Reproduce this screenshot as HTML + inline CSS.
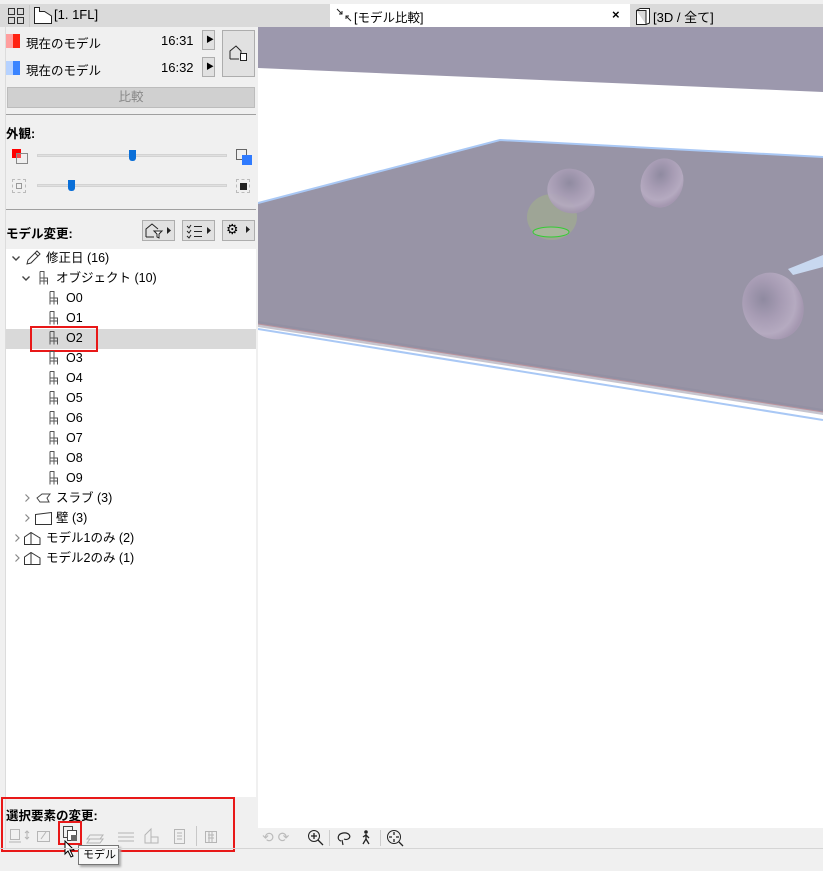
<!DOCTYPE html>
<html><head><meta charset="utf-8"><style>
*{box-sizing:border-box;margin:0;padding:0}
body{width:823px;height:871px;overflow:hidden;background:#f0f0f0;font-family:"Liberation Sans","Noto Sans CJK JP",sans-serif;font-size:12px;color:#000;position:relative}
.a{position:absolute}
.btn{position:absolute;background:#e1e1e1;border:1px solid #adadad}
.row{position:absolute;left:6px;width:250px;height:20px;line-height:20px;font-size:12.5px}
</style></head><body>
<svg width="0" height="0" style="position:absolute"><defs>
<symbol id="ch" viewBox="0 0 12 14"><path d="M3 .5H7V7H10.5V13.5 M3 .5V13.5 M3 7H7 M7 7V13.5 M10.5 10H3" fill="none" stroke="#555" stroke-width="1"/></symbol>
<symbol id="dn" viewBox="0 0 10 10"><path d="M1.5 3.5L5 7L8.5 3.5" fill="none" stroke="#444" stroke-width="1.4"/></symbol>
<symbol id="rt" viewBox="0 0 10 10"><path d="M3.5 1.5L7 5L3.5 8.5" fill="none" stroke="#888" stroke-width="1.2"/></symbol>
<symbol id="hs" viewBox="0 0 17 13"><path d="M.5 12.5V5L7 .5L16 6V12.5Z M7 .5V12.5" fill="none" stroke="#333"/></symbol>
<radialGradient id="tg" cx="40%" cy="35%" r="65%"><stop offset="0" stop-color="#8f8aa0"/><stop offset=".45" stop-color="#a79cb4"/><stop offset=".8" stop-color="#b5aac0"/><stop offset="1" stop-color="#a497b0"/></radialGradient>
</defs></svg>
<!-- top tab bar -->
<div class="a" style="left:0;top:4px;width:823px;height:23px;background:#dadada"></div>
<svg class="a" style="left:8px;top:8px" width="16" height="16"><g fill="none" stroke="#333"><rect x=".5" y=".5" width="6" height="6"/><rect x="9.5" y=".5" width="6" height="6"/><rect x=".5" y="9.5" width="6" height="6"/><rect x="9.5" y="9.5" width="6" height="6"/></g></svg>
<div class="a" style="left:29px;top:5px;width:1px;height:22px;background:#c8c8c8"></div>
<svg class="a" style="left:34px;top:7px" width="18" height="17"><path d="M.5 16.5V.5H5.5V4.5H10.5L17.5 9V16.5Z" fill="#fff" stroke="#222"/></svg>
<div class="a" style="left:54px;top:7px;font-size:13px">[1. 1FL]</div>
<div class="a" style="left:330px;top:4px;width:300px;height:23px;background:#fff"></div>
<svg class="a" style="left:336px;top:8px" width="16" height="14"><path d="M1 1L6 6M6 3V6H3 M15 13L10 8M10 11V8H13" fill="none" stroke="#222"/></svg>
<div class="a" style="left:354px;top:7px;font-size:12.5px">[モデル比較]</div>
<div class="a" style="left:612px;top:7px;font-size:13px;font-weight:bold">×</div>
<svg class="a" style="left:636px;top:8px" width="14" height="17"><path d="M.5 2.5 L4 .5 H13.5 V15 L10 16.5 H.5Z M10 16.5 V2.5 H.5" fill="#fff" stroke="#222"/></svg>
<div class="a" style="left:653px;top:7px;font-size:13px">[3D / 全て]</div>

<!-- left panel -->
<div class="a" style="left:0;top:27px;width:6px;height:821px;background:#f0f0f0;border-right:1px solid #dcdcdc"></div>
<div class="a" style="left:6px;top:34px;width:7px;height:14px;background:#ff9e9e"></div><div class="a" style="left:13px;top:34px;width:7px;height:14px;background:#f21"></div>
<div class="a" style="left:6px;top:61px;width:7px;height:14px;background:#b6d2ff"></div><div class="a" style="left:13px;top:61px;width:7px;height:14px;background:#3a84ff"></div>
<div class="a" style="left:26px;top:33px;font-size:12.5px">現在のモデル</div><div class="a" style="left:161px;top:33px;font-size:13px">16:31</div>
<div class="a" style="left:26px;top:60px;font-size:12.5px">現在のモデル</div><div class="a" style="left:161px;top:60px;font-size:13px">16:32</div>
<div class="btn" style="left:202px;top:30px;width:13px;height:20px"></div><div class="a" style="left:206px;top:34px;font-size:8px">▶</div>
<div class="btn" style="left:202px;top:57px;width:13px;height:20px"></div><div class="a" style="left:206px;top:61px;font-size:8px">▶</div>
<div class="btn" style="left:222px;top:30px;width:33px;height:47px"></div>
<svg class="a" style="left:229px;top:45px" width="20" height="16"><path d="M1 14V6L7 1L12 6V8 M1 14H10" fill="none" stroke="#222"/><rect x="11.5" y="8.5" width="6" height="7" fill="#fff" stroke="#222"/></svg>
<div class="a" style="left:7px;top:87px;width:248px;height:21px;background:#d0d0d0;border:1px solid #bcbcbc;text-align:center;line-height:19px;color:#888;font-size:12.5px">比較</div>
<div class="a" style="left:6px;top:114px;width:250px;height:1px;background:#a0a0a0"></div>
<div class="a" style="left:6px;top:123px;font-weight:bold;font-size:12.5px">外観:</div>
<div class="a" style="left:12px;top:149px;width:9px;height:9px;background:#f00"></div>
<div class="a" style="left:16px;top:153px;width:12px;height:11px;border:1px solid #888;background:rgba(240,240,240,.3)"></div>
<div class="a" style="left:37px;top:154px;width:190px;height:3px;background:#e0e0e0;border:1px solid #d3d3d3"></div>
<div class="a" style="left:129px;top:150px;width:7px;height:11px;background:#0a6fd8;border-radius:0 0 3px 3px"></div>
<div class="a" style="left:236px;top:149px;width:11px;height:11px;border:1px solid #666"></div>
<div class="a" style="left:242px;top:155px;width:10px;height:10px;background:#2f7bff"></div>
<div class="a" style="left:12px;top:179px;width:14px;height:14px;border:1px dashed #bbb"></div>
<div class="a" style="left:16px;top:183px;width:6px;height:6px;border:1px solid #999"></div>
<div class="a" style="left:37px;top:184px;width:190px;height:3px;background:#e0e0e0;border:1px solid #d3d3d3"></div>
<div class="a" style="left:68px;top:180px;width:7px;height:11px;background:#0a6fd8;border-radius:0 0 3px 3px"></div>
<div class="a" style="left:236px;top:179px;width:14px;height:14px;border:1px dashed #bbb"></div>
<div class="a" style="left:240px;top:183px;width:7px;height:7px;background:#222"></div>
<div class="a" style="left:6px;top:209px;width:250px;height:1px;background:#a0a0a0"></div>
<div class="a" style="left:6px;top:223px;font-weight:bold;font-size:12.5px">モデル変更:</div>
<div class="btn" style="left:142px;top:220px;width:33px;height:21px"></div>
<div class="btn" style="left:182px;top:220px;width:33px;height:21px"></div>
<div class="btn" style="left:222px;top:220px;width:33px;height:21px"></div>
<svg class="a" style="left:145px;top:222px" width="28" height="17"><path d="M1 15V7L7 2L13 7M1 15H9" fill="none" stroke="#222"/><path d="M9 9H17L14 12V16L12 15V12Z" fill="#fff" stroke="#222"/><path d="M22 5L26 8.5L22 12Z" fill="#222"/></svg>
<svg class="a" style="left:186px;top:222px" width="28" height="17"><path d="M1 4L3 6L5 3 M1 9L3 11L5 8 M1 14L3 16L5 13 M8 4.5H16 M8 9.5H16 M8 14.5H16" fill="none" stroke="#222"/><path d="M21 5L25 8.5L21 12Z" fill="#222"/></svg>
<div class="a" style="left:226px;top:221px;font-size:14px">⚙</div><svg class="a" style="left:245px;top:225px" width="6" height="9"><path d="M1 1L5 4.5L1 8Z" fill="#222"/></svg>
<!-- tree -->
<div class="a" style="left:6px;top:249px;width:250px;height:548px;background:#fff"></div>
<div class="a" style="left:6px;top:329px;width:250px;height:20px;background:#d9d9d9"></div>
<div class="a" style="left:30px;top:326px;width:68px;height:26px;border:2px solid #e81818"></div>
<div class="row" style="top:248px"><svg class="a" style="left:5px;top:5px" width="10" height="10"><use href="#dn"/></svg><svg class="a" style="left:19px;top:2px" width="16" height="16"><path d="M2 14L3 10L12 1L15 4L6 13Z M10 3L13 6" fill="none" stroke="#333"/></svg><span class="a" style="left:40px">修正日 (16)</span></div>
<div class="row" style="top:268px"><svg class="a" style="left:15px;top:5px" width="10" height="10"><use href="#dn"/></svg><svg class="a" style="left:31px;top:3px" width="12" height="14"><use href="#ch"/></svg><span class="a" style="left:50px">オブジェクト (10)</span></div>
<div class="row" style="top:288px"><svg class="a" style="left:41px;top:3px" width="12" height="14"><use href="#ch"/></svg><span class="a" style="left:60px">O0</span></div>
<div class="row" style="top:308px"><svg class="a" style="left:41px;top:3px" width="12" height="14"><use href="#ch"/></svg><span class="a" style="left:60px">O1</span></div>
<div class="row" style="top:328px"><svg class="a" style="left:41px;top:3px" width="12" height="14"><use href="#ch"/></svg><span class="a" style="left:60px">O2</span></div>
<div class="row" style="top:348px"><svg class="a" style="left:41px;top:3px" width="12" height="14"><use href="#ch"/></svg><span class="a" style="left:60px">O3</span></div>
<div class="row" style="top:368px"><svg class="a" style="left:41px;top:3px" width="12" height="14"><use href="#ch"/></svg><span class="a" style="left:60px">O4</span></div>
<div class="row" style="top:388px"><svg class="a" style="left:41px;top:3px" width="12" height="14"><use href="#ch"/></svg><span class="a" style="left:60px">O5</span></div>
<div class="row" style="top:408px"><svg class="a" style="left:41px;top:3px" width="12" height="14"><use href="#ch"/></svg><span class="a" style="left:60px">O6</span></div>
<div class="row" style="top:428px"><svg class="a" style="left:41px;top:3px" width="12" height="14"><use href="#ch"/></svg><span class="a" style="left:60px">O7</span></div>
<div class="row" style="top:448px"><svg class="a" style="left:41px;top:3px" width="12" height="14"><use href="#ch"/></svg><span class="a" style="left:60px">O8</span></div>
<div class="row" style="top:468px"><svg class="a" style="left:41px;top:3px" width="12" height="14"><use href="#ch"/></svg><span class="a" style="left:60px">O9</span></div>
<div class="row" style="top:488px"><svg class="a" style="left:16px;top:5px" width="10" height="10"><use href="#rt"/></svg><svg class="a" style="left:30px;top:5px" width="15" height="10"><path d="M1 5L6 1H14L11 5L13 9H4Z" fill="none" stroke="#444"/></svg><span class="a" style="left:50px">スラブ (3)</span></div>
<div class="row" style="top:508px"><svg class="a" style="left:16px;top:5px" width="10" height="10"><use href="#rt"/></svg><svg class="a" style="left:29px;top:4px" width="17" height="13"><path d="M.5 2.5L16.5 .5V12.5H.5Z" fill="none" stroke="#333"/></svg><span class="a" style="left:50px">壁 (3)</span></div>
<div class="row" style="top:528px"><svg class="a" style="left:6px;top:5px" width="10" height="10"><use href="#rt"/></svg><svg class="a" style="left:18px;top:4px" width="17" height="13"><use href="#hs"/></svg><span class="a" style="left:40px">モデル1のみ (2)</span></div>
<div class="row" style="top:548px"><svg class="a" style="left:6px;top:5px" width="10" height="10"><use href="#rt"/></svg><svg class="a" style="left:18px;top:4px" width="17" height="13"><use href="#hs"/></svg><span class="a" style="left:40px">モデル2のみ (1)</span></div>
<!-- bottom left box -->
<div class="a" style="left:1px;top:797px;width:234px;height:55px;border:2px solid #e81818"></div>
<div class="a" style="left:6px;top:805px;font-weight:bold;font-size:12.5px">選択要素の変更:</div>
<svg class="a" style="left:8px;top:827px" width="225" height="20"><g fill="none" stroke="#b5b5b5">
<rect x="2.5" y="2.5" width="9" height="10"/><path d="M1 15H13 M19 4V12M17 6L19 4L21 6M17 10L19 12L21 10"/>
<rect x="29.5" y="4.5" width="12" height="10"/><path d="M33 12L38 5"/>
<path d="M82 8H95L92 12H79Z M82 12H95L92 16H79Z"/><path d="M110 6H126M110 10H126M110 14H126"/>
<path d="M137 16V8L143 2V16Z M143 10H150V16H137"/><rect x="166.5" y="2.5" width="10" height="14"/><path d="M169 6H174M169 9H174M169 12H174"/>
<rect x="197.5" y="4.5" width="11" height="11"/><path d="M200 8H206M200 11H206M201 5V15M204 5V15"/></g></svg>
<div class="a" style="left:196px;top:826px;width:1px;height:20px;background:#c8c8c8"></div>
<div class="a" style="left:58px;top:821px;width:24px;height:24px;border:2px solid #e81818"></div>
<svg class="a" style="left:62px;top:825px" width="18" height="18"><rect x="1.5" y="1.5" width="9" height="11" fill="none" stroke="#444"/><rect x="5.5" y="5.5" width="9" height="10" fill="#fff" stroke="#444"/><rect x="9" y="10" width="6" height="6" fill="#666"/></svg>
<div class="a" style="left:78px;top:845px;width:41px;height:20px;background:#f8f8f8;border:1px solid #767676;box-shadow:2px 2px 2px #aaa;font-size:11px;line-height:18px;padding-left:4px">モデル</div>
<svg class="a" style="left:64px;top:840px" width="12" height="18"><path d="M1 1V14L4 11L7 17L9 16L6 10H10Z" fill="#fff" stroke="#000"/></svg>
<!-- viewport -->
<svg class="a" style="left:258px;top:27px" width="565" height="801">
<rect width="565" height="801" fill="#fff"/>
<polygon points="0,0 565,0 565,65 0,41" fill="#9c98ad"/>
<polygon points="0,176 242,113 565,130 565,385 0,297" fill="#9894a6"/>
<polyline points="0,176 242,113 565,130" fill="none" stroke="#a9c8f5" stroke-width="2"/>
<polyline points="0,297 565,385" fill="none" stroke="#e89a9a" stroke-width="1"/>
<polygon points="0,300 565,388 565,382 0,294" fill="#8e8ba0" opacity=".5"/>
<polyline points="0,302 565,393" fill="none" stroke="#a9c8f5" stroke-width="2"/>
<ellipse cx="294" cy="190" rx="25" ry="23" fill="#9ea596"/>
<ellipse cx="293" cy="205" rx="18" ry="5" fill="#a8b59c" stroke="#3c3" stroke-width="1"/>
<ellipse cx="313" cy="164" rx="24" ry="22" fill="url(#tg)" transform="rotate(25 313 164)" opacity=".92"/>
<ellipse cx="404" cy="156" rx="21" ry="25" fill="url(#tg)" transform="rotate(20 404 156)"/>
<ellipse cx="515" cy="279" rx="30" ry="34" fill="url(#tg)" transform="rotate(-25 515 279)"/>
<polygon points="530,242 565,228 565,240 535,248" fill="#c8d8f0"/>
</svg>
<div class="a" style="left:258px;top:828px;width:565px;height:20px;background:#f0f0f0"></div>
<div class="a" style="left:262px;top:829px;font-size:14px;color:#bbb">⟲ ⟳</div>
<svg class="a" style="left:307px;top:829px" width="18" height="18"><circle cx="7" cy="7" r="5.5" fill="none" stroke="#222"/><path d="M4 7H10M7 4V10M11 11L16 16" stroke="#222" stroke-width="1.3"/></svg>
<div class="a" style="left:329px;top:830px;width:1px;height:16px;background:#ccc"></div>
<svg class="a" style="left:336px;top:830px" width="18" height="16"><path d="M5 11C1 10 1 4 7 3C13 2 16 7 12 9C10 10 8 9 8 9M6 10L7 15" fill="none" stroke="#222" stroke-width="1.2"/></svg>
<svg class="a" style="left:360px;top:829px" width="12" height="17"><circle cx="6" cy="3" r="1.8" fill="#222"/><path d="M6 5V10L3 15M6 10L9 15M3 8L6 6L9 9" fill="none" stroke="#222" stroke-width="1.3"/></svg>
<div class="a" style="left:380px;top:830px;width:1px;height:16px;background:#ccc"></div>
<svg class="a" style="left:386px;top:829px" width="18" height="18"><circle cx="8" cy="8" r="6.5" fill="none" stroke="#222"/><path d="M8 3V6M8 10V13M3 8H6M10 8H13M13 13L17 17" stroke="#222" stroke-width="1.3"/></svg>
<div class="a" style="left:0;top:848px;width:823px;height:1px;background:#d5d5d5"></div>
</body></html>
